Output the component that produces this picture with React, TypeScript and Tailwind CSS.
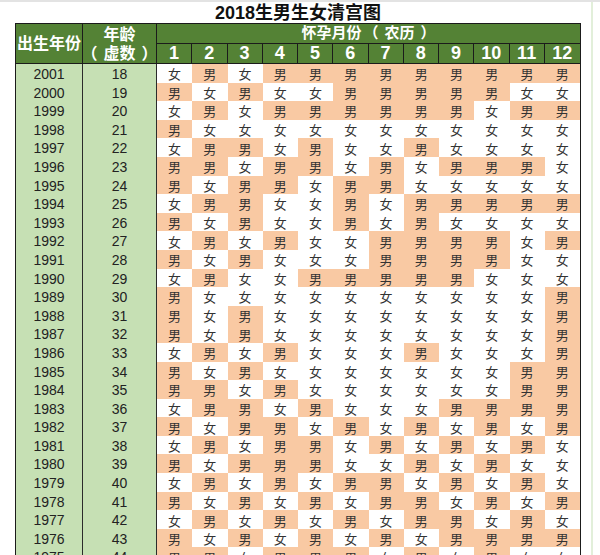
const rows: [number, number, string][] = [
  [2001, 18, "女男女男男男男男男男男男"],
  [2000, 19, "男女男女女男男男男男女女"],
  [1999, 20, "女男女男男男男男男女男男"],
  [1998, 21, "男女女女女女女女女女女女"],
  [1997, 22, "女男男女男女女男女女女女"],
  [1996, 23, "男男女男男女男女男男男女"],
  [1995, 24, "男女男男女男男女女女女女"],
  [1994, 25, "女男男女女男女男男男男男"],
  [1993, 26, "男女男女女男女男女女女女"],
  [1992, 27, "女男女男女女男男男男女男"],
  [1991, 28, "男女男女女女男男男男女女"],
  [1990, 29, "女男女女男男男男男女女女"],
  [1989, 30, "男女女女女女女女女女女男"],
  [1988, 31, "男女男女女女女女女女女男"],
  [1987, 32, "男女男女女女女女女女女男"],
  [1986, 33, "女男女男女女女男女女女男"],
  [1985, 34, "男女男女女女女女女女男男"],
  [1984, 35, "男男女男女女女女女女男男"],
  [1983, 36, "女男男女男女女女男男男男"],
  [1982, 37, "男女男男女男女男女男女男"],
  [1981, 38, "女男女男男女男女男女男女"],
  [1980, 39, "男女男男男女女男女男女女"],
  [1979, 40, "女男女男女男男女男女男女"],
  [1978, 41, "男女男女男女男男女男女男"],
  [1977, 42, "女男女男女男女男男女男女"],
  [1976, 43, "男女男女男女男女男男男男"],
  [1975, 44, "男男女男男男女男女男女女"],
];

const months = [1, 2, 3, 4, 5, 6, 7, 8, 9, 10, 11, 12];

// full-width brackets with the loose spacing of the sheet
const Open = () => <span className="ml-[2px] mr-[6px]">（</span>;
const Close = () => <span className="ml-[6px]">）</span>;

const App = () => {
  return (
    <div className="flex h-[555px] w-[600px] overflow-hidden border-t-2 border-[#e3e3e3] bg-white font-['Liberation_Sans','Noto_Sans_CJK_SC',sans-serif]">
      <div className="w-[591px] shrink-0 pl-[15px]">
        <div className="flex h-[21px] w-[566px] items-center justify-center text-[18px] font-bold leading-none text-[#111]">
          2018生男生女清宫图
        </div>
        <div className="w-[566px] border-[1.5px] border-[#1b1b1b]">
          {/* header */}
          <div className="grid grid-cols-[67px_74px_repeat(12,minmax(0,1fr))] grid-rows-[20px_20px] bg-[#548235] font-bold text-white">
            <div className="row-span-2 flex items-center justify-center border-r border-b border-[#1b1b1b] text-[16px]">
              出生年份
            </div>
            <div className="row-span-2 flex flex-col items-center justify-center border-r border-b border-[#1b1b1b] text-[16px] leading-[19px]">
              <span>年龄</span>
              <span className="-ml-[2px] whitespace-nowrap">
                <Open />
                虚数
                <Close />
              </span>
            </div>
            <div className="col-span-12 flex items-center justify-center whitespace-nowrap border-b border-[#1b1b1b] text-[15px]">
              怀孕月份
              <Open />
              农历
              <Close />
            </div>
            {months.map((m) => (
              <div
                key={m}
                className={
                  m === 12
                    ? "flex items-center justify-center border-b border-[#1b1b1b] text-[18px]"
                    : "flex items-center justify-center border-r border-b border-[#1b1b1b] text-[18px]"
                }
              >
                {m}
              </div>
            ))}
          </div>
          {/* body */}
          {rows.map(([year, age, gender]) => (
            <div
              key={year}
              className="grid h-[18.6px] grid-cols-[67px_74px_repeat(12,minmax(0,1fr))] text-[#222]"
            >
              <div className="flex items-center justify-center border-r border-b border-[#2b2b2b] bg-[#c6e0b4] text-[14px]">
                {year}
              </div>
              <div className="flex items-center justify-center border-r border-b border-[#2b2b2b] bg-[#c6e0b4] text-[14px]">
                {age}
              </div>
              {gender.split("").map((g, i) => (
                <div
                  key={i}
                  className={
                    g === "男"
                      ? "flex items-center justify-center bg-[#f9c9a3] text-[13px] text-[#333]"
                      : "flex items-center justify-center bg-white text-[13px] text-[#333]"
                  }
                >
                  {g}
                </div>
              ))}
            </div>
          ))}
        </div>
      </div>
      <div className="h-full w-[2px] bg-[#e2efda]" />
    </div>
  );
};

export default App;
